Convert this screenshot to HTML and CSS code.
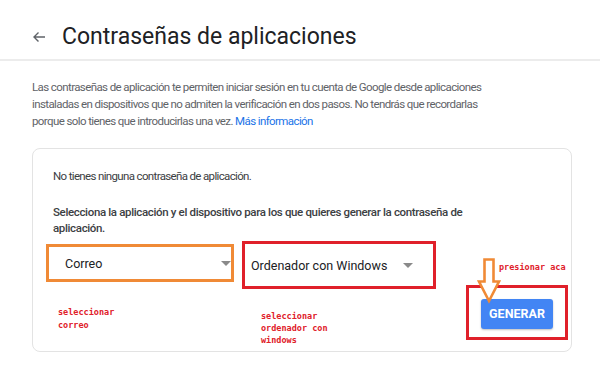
FILE: index.html
```html
<!DOCTYPE html>
<html lang="es">
<head>
    <meta charset="utf-8">
    <title>Contraseñas de aplicaciones</title>
    <link rel="stylesheet" href="styles.css">
</head>
<body>
    <div class="header">
        <svg class="back" width="14" height="12" viewBox="0 0 14 12">
            <path d="M13 6H2M6.5 1.5L2 6l4.5 4.5" fill="none" stroke="#5f6368" stroke-width="1.4"/>
        </svg>
        <h1>Contraseñas de aplicaciones</h1>
    </div>

    <p class="intro">
        Las contraseñas de aplicación te permiten iniciar sesión en tu cuenta de Google desde aplicaciones<br>
        instaladas en dispositivos que no admiten la verificación en dos pasos. No tendrás que recordarlas<br>
        porque solo tienes que introducirlas una vez. <a href="#">Más información</a>
    </p>

    <div class="card">
        <p class="empty">No tienes ninguna contraseña de aplicación.</p>
        <p class="lead">Selecciona la aplicación y el dispositivo para los que quieres generar la contraseña de<br>aplicación.</p>

        <div class="pickers">
            <div class="col col-app">
                <div class="select select-app">
                    <span>Correo</span>
                    <span class="caret"></span>
                </div>
                <div class="note">seleccionar<br>correo</div>
            </div>

            <div class="col col-device">
                <div class="select select-device">
                    <span>Ordenador con Windows</span>
                    <span class="caret"></span>
                </div>
                <div class="note">seleccionar<br>ordenador con<br>windows</div>
            </div>

            <div class="col col-action">
                <div class="note note-press">presionar aca</div>
                <div class="mark">
                    <button class="generate">GENERAR</button>
                </div>
                <svg class="pointer" width="24" height="46" viewBox="0 0 24 46">
                    <path d="M7.5 1.5h9v22h5.5L12 43 2 23.5h5.5z" fill="#fff" stroke="#f08a36" stroke-width="2.6" stroke-linejoin="miter"/>
                </svg>
            </div>
        </div>
    </div>
</body>
</html>
```

FILE: styles.css
```css
body {
    margin: 0;
    font-family: Roboto, 'Noto Sans', sans-serif;
    background-color: #fff;
    color: #3c4043;
}

.header {
    display: flex;
    align-items: center;
    height: 61px;
    padding: 14px 0 0 32px;
    border-bottom: 2px solid #ececec;
    box-sizing: border-box;
}

.header h1 {
    margin: 0 0 0 16px;
    font-size: 23px;
    font-weight: 400;
    color: #202124;
}

.intro {
    margin: 18px 0 0 32px;
    font-size: 11.5px;
    line-height: 17px;
    letter-spacing: -0.6px;
    white-space: nowrap;
    color: #5f6368;
}

.intro a {
    color: #1a73e8;
    text-decoration: none;
}

.card {
    margin: 18px 28px 0 32px;
    height: 204px;
    border: 1px solid #e3e3e3;
    border-radius: 8px;
    padding: 19px 20px 0;
    box-sizing: border-box;
}

.empty {
    margin: 0;
    font-size: 11.5px;
    line-height: 16px;
    letter-spacing: -0.65px;
    color: #3c4043;
}

.lead {
    margin: 20px 0 0;
    font-size: 11.5px;
    line-height: 16px;
    letter-spacing: -0.35px;
    font-weight: 500;
    white-space: nowrap;
    color: #3c4043;
}

.pickers {
    display: flex;
    margin-top: 5px;
    margin-left: -7px;
}

.col {
    display: flex;
    flex-direction: column;
}

.select {
    display: flex;
    align-items: center;
    justify-content: space-between;
    box-sizing: border-box;
    font-size: 12.5px;
    color: #202124;
}

.select-app {
    width: 188px;
    height: 38px;
    margin-top: 3px;
    padding: 0 0 0 16px;
    border: 3px solid #f08a36;
}

.select-device {
    width: 194px;
    height: 48px;
    margin-left: 8px;
    padding: 0 20px 0 6px;
    border: 3px solid #e0202a;
}

.caret {
    width: 0;
    height: 0;
    border-left: 5px solid transparent;
    border-right: 5px solid transparent;
    border-top: 5px solid #8a8a8a;
}

.note {
    font-family: 'DejaVu Sans Mono', 'Liberation Mono', monospace;
    font-weight: 700;
    font-size: 8.5px;
    line-height: 12.5px;
    color: #e0202a;
}

.col-app .note {
    margin: 24px 0 0 12px;
}

.col-device .note {
    margin: 21px 0 0 27px;
    line-height: 12px;
}

.col-action {
    position: relative;
    margin-left: 30px;
}

.note-press {
    margin: 20px 0 0 33px;
}

.mark {
    margin-top: 11px;
    width: 102px;
    height: 55px;
    box-sizing: border-box;
    border: 3px solid #e0202a;
    padding: 11px 0 0 12px;
}

.generate {
    width: 72px;
    height: 30px;
    border: none;
    border-radius: 3px;
    background-color: #4285f4;
    color: #fff;
    font-family: inherit;
    font-size: 12.5px;
    font-weight: 700;
    box-shadow: 0 1px 2px rgba(0, 0, 0, 0.25);
}

.pointer {
    position: absolute;
    left: 11px;
    top: 17px;
}
```
